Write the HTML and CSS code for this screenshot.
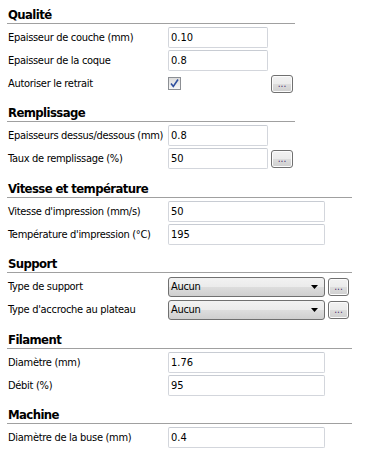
FILE: index.html
```html
<!DOCTYPE html>
<html>
<head>
  <link rel="stylesheet" href="styles.css">
</head>
<body>
  <div class="panel">

    <div class="group narrow">
      <div class="title">Qualité</div>
      <div class="rows">
        <span class="label">Epaisseur de couche (mm)</span>
        <input class="field" value="0.10">
        <span></span>
        <span class="label">Epaisseur de la coque</span>
        <input class="field" value="0.8">
        <span></span>
        <span class="label">Autoriser le retrait</span>
        <span class="cell"><span class="check"><svg width="11" height="11" viewBox="0 0 11 11"><path d="M2 5.5 L4.3 8.5 L9 1.5" fill="none" stroke="#2f4f9e" stroke-width="1.6"/></svg></span></span>
        <button class="more">...</button>
      </div>
    </div>

    <div class="group narrow">
      <div class="title">Remplissage</div>
      <div class="rows">
        <span class="label">Epaisseurs dessus/dessous (mm)</span>
        <input class="field" value="0.8">
        <span></span>
        <span class="label">Taux de remplissage (%)</span>
        <input class="field" value="50">
        <button class="more">...</button>
      </div>
    </div>

    <div class="group">
      <div class="title">Vitesse et température</div>
      <div class="rows">
        <span class="label">Vitesse d'impression (mm/s)</span>
        <input class="field" value="50">
        <span></span>
        <span class="label">Température d'impression (°C)</span>
        <input class="field" value="195">
        <span></span>
      </div>
    </div>

    <div class="group">
      <div class="title">Support</div>
      <div class="rows">
        <span class="label">Type de support</span>
        <div class="select">Aucun<svg width="7" height="4" viewBox="0 0 7 4"><path d="M0 0 H7 L3.5 4 Z" fill="#000"/></svg></div>
        <button class="more">...</button>
        <span class="label">Type d'accroche au plateau</span>
        <div class="select">Aucun<svg width="7" height="4" viewBox="0 0 7 4"><path d="M0 0 H7 L3.5 4 Z" fill="#000"/></svg></div>
        <button class="more">...</button>
      </div>
    </div>

    <div class="group">
      <div class="title">Filament</div>
      <div class="rows">
        <span class="label">Diamètre (mm)</span>
        <input class="field" value="1.76">
        <span></span>
        <span class="label">Débit (%)</span>
        <input class="field" value="95">
        <span></span>
      </div>
    </div>

    <div class="group">
      <div class="title">Machine</div>
      <div class="rows">
        <span class="label">Diamètre de la buse (mm)</span>
        <input class="field" value="0.4">
        <span></span>
      </div>
    </div>

  </div>
</body>
</html>
```

FILE: styles.css
```css
* {
  margin: 0;
  padding: 0;
  box-sizing: border-box;
}

body {
  background: #fff;
  color: #000;
  font-family: "DejaVu Sans Condensed", "DejaVu Sans", sans-serif;
  font-stretch: condensed;
  font-size: 11px;
  letter-spacing: -0.3px;
}

.panel {
  display: flex;
  flex-direction: column;
  gap: 11.4px;
  padding: 7px 0 0 7px;
}

.group {
  width: 345px;
}

.group.narrow {
  width: 288px;
}

.title {
  font-size: 13px;
  font-weight: bold;
  line-height: 16px;
  letter-spacing: -0.6px;
  padding-left: 1px;
  border-bottom: 1px solid #a0a0a0;
}

.rows {
  display: grid;
  grid-template-columns: 158px 157px 21px;
  grid-auto-rows: 21px;
  column-gap: 3px;
  row-gap: 2px;
  margin-top: 3px;
}

.narrow .rows {
  grid-template-columns: 158px 100px 22px;
}

.label {
  display: flex;
  align-items: center;
  padding-left: 1px;
  white-space: nowrap;
}

.cell {
  display: flex;
  align-items: center;
}

.field {
  height: 21px;
  border: 1px solid #d3d6dc;
  border-top-color: #c8ccd3;
  border-radius: 2px;
  padding: 0 2px;
  font: inherit;
  color: #000;
  background: #fff;
  outline: none;
}

.check {
  width: 13px;
  height: 13px;
  border: 1px solid #8c8f94;
  background: linear-gradient(#dcdcdc, #f6f6f6);
  display: flex;
  align-items: center;
  justify-content: center;
}

.more {
  align-self: center;
  height: 18px;
  border: 1px solid #707070;
  border-radius: 3px;
  background: linear-gradient(#f2f2f2 0%, #ebebeb 50%, #dddddd 50%, #cfcfcf 100%);
  box-shadow: inset 0 0 0 1px #fcfcfc;
  font: inherit;
  font-size: 10px;
  line-height: 14px;
  letter-spacing: 0;
  color: #4a2a6a;
  padding: 0;
}

.select {
  height: 20px;
  align-self: center;
  border: 1px solid #707070;
  border-radius: 3px;
  background: linear-gradient(#f2f2f2 0%, #ebebeb 50%, #dddddd 50%, #cfcfcf 100%);
  display: flex;
  align-items: center;
  justify-content: space-between;
  padding: 0 6px 0 2px;
}
```
